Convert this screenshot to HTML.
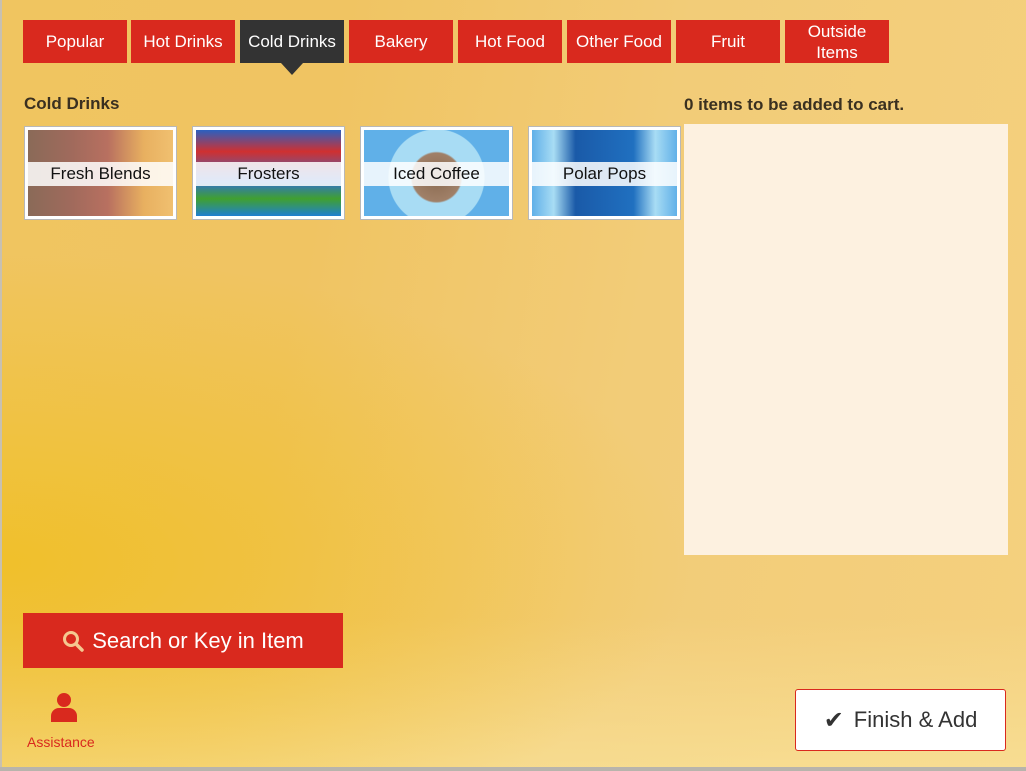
<!DOCTYPE html><html><head><style>
body{margin:0;width:1026px;height:771px;overflow:hidden;font-family:"Liberation Sans",sans-serif;position:relative;
background:linear-gradient(180deg,rgba(240,196,100,.0) 0%,rgba(250,225,150,.0) 80%,rgba(250,230,160,.6) 100%),linear-gradient(100deg,#f0c560 0%,#f0c462 30%,#f2cc78 60%,#f4d07e 100%);}
.bg2{position:absolute;left:0;top:250px;width:700px;height:521px;background:radial-gradient(ellipse at 0% 60%,rgba(240,190,20,.7),rgba(240,190,20,0) 70%);}
.lb{position:absolute;left:0;top:0;width:2px;height:771px;background:#c8c0b0}
.bb{position:absolute;left:0;top:767px;width:1026px;height:4px;background:#b8b4ac}
.tab{position:absolute;top:20px;width:104px;height:43px;background:#d9291e;color:#fff;font-size:17px;display:flex;align-items:center;justify-content:center;text-align:center;line-height:21px}
.tab.a{background:#333}
.tab.a:after{content:"";position:absolute;left:41px;top:43px;border:11px solid transparent;border-top:12px solid #333;border-bottom:0}
h2{position:absolute;left:24px;top:94px;margin:0;font-size:17px;color:#3a3020;font-weight:bold}
.tile{position:absolute;top:126px;width:151px;height:92px;background:#fff;border:1px solid #b8b8b8}
.tile .img{position:absolute;left:3px;top:3px;right:3px;bottom:3px}
.tile .l{position:absolute;left:3px;right:3px;top:35px;height:24px;background:rgba(255,255,255,.85);font-size:17px;text-align:center;line-height:24px;color:#111}
.cart{position:absolute;left:684px;top:124px;width:324px;height:431px;background:#fdf1e0}
.ct{position:absolute;left:684px;top:95px;font-size:17px;font-weight:bold;color:#3a3020}
.search{position:absolute;left:23px;top:613px;width:320px;height:55px;background:#d9291e;color:#fff;font-size:22px;display:flex;align-items:center;justify-content:center;gap:8px}
.fin{position:absolute;left:795px;top:689px;width:209px;height:60px;background:#fff;border:1px solid #d9291e;border-radius:3px;font-size:22px;color:#333;display:flex;align-items:center;justify-content:center;gap:10px}
</style></head><body>
<div class="bg2"></div><div class="lb"></div><div class="bb"></div>
<div class="tab" style="left:23px">Popular</div>
<div class="tab" style="left:131px">Hot Drinks</div>
<div class="tab a" style="left:240px">Cold Drinks</div>
<div class="tab" style="left:349px">Bakery</div>
<div class="tab" style="left:458px">Hot Food</div>
<div class="tab" style="left:567px">Other Food</div>
<div class="tab" style="left:676px">Fruit</div>
<div class="tab" style="left:785px">Outside<br>Items</div>
<h2>Cold Drinks</h2>
<div class="ct">0 items to be added to cart.</div>
<div class="tile" style="left:24px"><div class="img" style="background:linear-gradient(90deg,#8a6a58 0%,#a06a5c 30%,#b87060 55%,#e8b060 80%,#f0c070 100%)"></div><div class="l">Fresh Blends</div></div>
<div class="tile" style="left:192px"><div class="img" style="background:linear-gradient(180deg,#2a60c0 0%,#d03030 25%,#3070d0 60%,#40a030 80%,#2080d0 100%)"></div><div class="l">Frosters</div></div>
<div class="tile" style="left:360px"><div class="img" style="background:radial-gradient(circle at 50% 55%,#8a6a50 0,#a08068 28%,#a8dcf4 30%,#a8dcf4 55%,#60b0e8 56%)"></div><div class="l">Iced Coffee</div></div>
<div class="tile" style="left:528px"><div class="img" style="background:linear-gradient(90deg,#60b0e8 0,#a8dcf4 15%,#1a5aa8 30%,#2070c0 70%,#a8dcf4 85%,#60b0e8 100%)"></div><div class="l">Polar Pops</div></div>
<div class="cart"></div>
<div class="search"><svg width="22" height="22" viewBox="0 0 22 22"><circle cx="9" cy="9" r="6.5" fill="none" stroke="#f5c890" stroke-width="3"/><path d="M14 14l6 6" stroke="#f5c890" stroke-width="3.5" stroke-linecap="round"/></svg>Search or Key in Item</div>
<svg style="position:absolute;left:50px;top:692px" width="28" height="30" viewBox="0 0 28 30"><circle cx="14" cy="8" r="7" fill="#d9291e"/><path d="M1 30v-6a8 8 0 0 1 8-8h10a8 8 0 0 1 8 8v6z" fill="#d9291e"/></svg>
<div style="position:absolute;left:27px;top:734px;font-size:14px;color:#d9291e">Assistance</div>
<div class="fin"><span style="font-size:24px">✔</span>Finish &amp; Add</div>
</body></html>
